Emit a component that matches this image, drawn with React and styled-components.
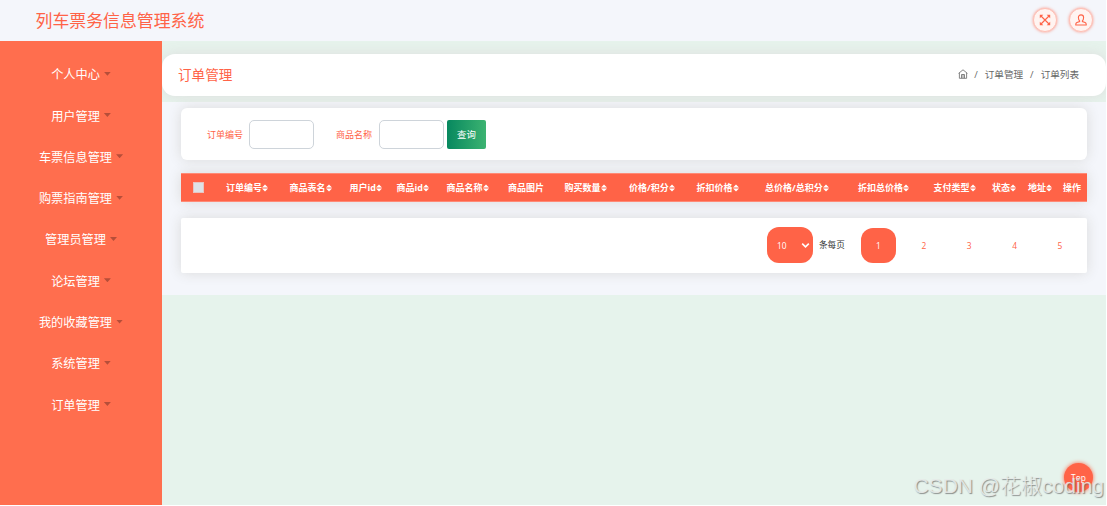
import React from "react";
import styled, { createGlobalStyle } from "styled-components";

const Global = createGlobalStyle`
  * { box-sizing: border-box; }
  body { margin: 0; background: #fff; overflow: hidden; }
  body, input, button, select { font-family: "Open Sans", "Noto Sans CJK SC", sans-serif; }
`;

const Page = styled.div`
  width: 1106px;
  height: 505px;
  display: flex;
  flex-direction: column;
  background: #e6f3ec;
  position: relative;
  overflow: hidden;
`;

const Header = styled.header`
  height: 41px;
  flex: none;
  display: flex;
  align-items: center;
  justify-content: space-between;
  padding: 0 13px 1px 35.5px;
  background: #f4f6fb;
`;

const Brand = styled.div`
  font-size: 16.9px;
  line-height: 24px;
  padding-top: 2px;
  color: #ff6347;
  white-space: nowrap;
`;

const Actions = styled.div`
  display: flex;
  gap: 12px;
`;

const RoundButton = styled.button`
  width: 24px;
  height: 24px;
  padding: 0;
  display: flex;
  align-items: center;
  justify-content: center;
  border: 1px solid #ffc1b6;
  border-radius: 50%;
  background: #fff4f1;
  box-shadow: 0 0 3px #ff6347a8;
  color: #ff6347;
`;

const Body = styled.div`
  flex: 1;
  display: flex;
  min-height: 0;
`;

const Sidebar = styled.nav`
  width: 162px;
  flex: none;
  padding-top: 13.6px;
  background: #ff6e4e;
  position: relative;
  z-index: 1;
`;

const MenuItem = styled.a`
  height: 41.3px;
  display: flex;
  align-items: center;
  justify-content: center;
  gap: 4px;
  color: #fff;
  font-size: 12.2px;
  line-height: 18px;
`;

const Caret = styled.span`
  width: 7px;
  height: 4px;
  margin-top: -3px;
  background: #b64e39;
  clip-path: polygon(0 0, 100% 0, 50% 100%);
`;

const Main = styled.main`
  flex: 1;
  min-width: 0;
  display: flex;
  flex-direction: column;
`;

const TitleBar = styled.div`
  height: 42px;
  margin: 13px 0 6px;
  flex: none;
  display: flex;
  align-items: center;
  justify-content: space-between;
  padding: 0 27px 0 16px;
  border-radius: 13px;
  background: #fff;
  box-shadow: 0 0 13px #dedede;
`;

const PageTitle = styled.h1`
  margin: 0;
  font-size: 13.6px;
  line-height: 20px;
  font-weight: 400;
  color: #ff6347;
`;

const Breadcrumb = styled.div`
  display: flex;
  align-items: center;
  gap: 7px;
  font-size: 9.6px;
  line-height: 14px;
  color: #666;

  svg { margin: -2px -1px 0 0; }
`;

const Content = styled.section`
  height: 193px;
  flex: none;
  padding: 6px 19px 0;
  background: #f4f6fb;
`;

const Panel = styled.div`
  background: #fff;
  box-shadow: 0 0 13px #dadada;
  display: flex;
  align-items: center;
`;

const SearchPanel = styled(Panel)`
  height: 52px;
  border-radius: 6px;
  padding-left: 26px;
`;

const Label = styled.label`
  width: ${(p) => p.$width}px;
  padding-top: 2px;
  font-size: 9px;
  line-height: 14px;
  color: #ff6347;
  white-space: nowrap;
`;

const Field = styled.input`
  width: 65px;
  height: 29px;
  margin-right: ${(p) => p.$gap}px;
  border: 1px solid #ced4da;
  border-radius: 5px;
  background: #fff;
`;

const Search = styled.button`
  width: 39px;
  height: 29px;
  padding: 0;
  border: 0;
  border-radius: 2px;
  font-size: 9.4px;
  color: #fff;
  background: linear-gradient(90deg, #07885f, #3cb371);
`;

const TableHead = styled.div`
  height: 29px;
  margin-top: 13px;
  display: grid;
  grid-template-columns: 45px 63.5px 60px 47px 50px 61.5px 56.5px 64.5px 67.5px 68.5px 93px 75.5px 58.5px 36px 35px 1fr;
  align-items: center;
  border: solid #ff8a76;
  border-width: 1px 0;
  background: #ff6347;
  box-shadow: 0 0 13px #dadada;
  color: #fff;
`;

const Check = styled.span`
  width: 11px;
  height: 11px;
  margin-left: 12px;
  background: #dee2e6;
  border: 1px solid #e8c4c1;
`;

const HeadCell = styled.div`
  display: flex;
  align-items: center;
  font-size: 9px;
  line-height: 14px;
  font-weight: 700;
  white-space: nowrap;
`;

const Pager = styled(Panel)`
  height: 55px;
  margin-top: 16px;
  border-radius: 2px;
  justify-content: flex-end;
  padding: 0 9.5px 1px 0;
`;

const SizeSelect = styled.div`
  width: 46px;
  height: 36px;
  padding: 0 3px 0 9.5px;
  display: flex;
  align-items: center;
  justify-content: space-between;
  border-radius: 12px;
  background: #ff6347;
  color: #fff;
  font-size: 8.4px;
`;

const PerPage = styled.span`
  width: 42px;
  margin: 0 0 0 5.5px;
  font-size: 8.6px;
  line-height: 14px;
  color: #333;
`;

const Pages = styled.div`
  display: flex;
  gap: 10.4px;
`;

const PageLink = styled.a`
  width: 35px;
  height: 35px;
  display: flex;
  align-items: center;
  justify-content: center;
  border-radius: 12px;
  font-size: 8.4px;
  background: ${(p) => (p.$active ? "#ff6347" : "transparent")};
  color: ${(p) => (p.$active ? "#fff" : "#ff6347")};
`;

const TopButton = styled.a`
  position: absolute;
  right: 13px;
  bottom: 13px;
  width: 29px;
  height: 29px;
  display: flex;
  align-items: center;
  justify-content: center;
  border-radius: 50%;
  background: #ff6347;
  box-shadow: 0 0 4px #ff6347;
  color: #fff;
  font-size: 8.4px;
`;

const Watermark = styled.div`
  position: absolute;
  right: 2px;
  bottom: 4px;
  font-family: "Liberation Sans", "Noto Sans CJK SC", sans-serif;
  font-size: 21px;
  line-height: 30px;
  font-weight: 300;
  white-space: nowrap;
  color: rgba(232, 236, 234, 0.9);
  text-shadow: 1px 1px 1px rgba(90, 90, 90, 0.65);
`;

const ExpandIcon = () => (
  <svg width="12" height="12" viewBox="0 0 12 12" fill="none" stroke="currentColor" strokeWidth="1.1">
    <path d="M2 2l8 8M10 2l-8 8" />
    <path fill="currentColor" stroke="none" d="M.8.8h3.500L.8 4.300zM11.200.8v3.500L7.700.8zM11.200 11.200H7.700l3.500-3.500zM.8 11.200V7.700l3.500 3.500z" />
  </svg>
);

const UserIcon = () => (
  <svg width="12" height="12" viewBox="0 0 12 12" fill="none" stroke="currentColor" strokeWidth="1.1">
    <path d="M4.600 6.800C3.700 6 3.400 4.900 3.400 3.600 3.400 1.800 4.400.9 6 .9s2.600.9 2.600 2.700c0 1.300-.3 2.400-1.200 3.200v.8l2.700 1c.7.3 1 .8 1.100 1.400v1H.8v-1c.1-.6.4-1.100 1.100-1.400l2.700-1z" />
  </svg>
);

const HomeIcon = () => (
  <svg width="10" height="10" viewBox="0 0 10 10" fill="none" stroke="#777" strokeWidth=".9">
    <path d="M.6 4.400 5 .8l4.400 3.600M1.400 3.800v5.500h7.200V3.800M3.500 9.200V5.500h3v3.700M5 5.500v3.700" />
  </svg>
);

const SortIcon = () => (
  <svg width="6" height="8" viewBox="0 0 6 8" fill="currentColor">
    <path d="M3 .4 6 3.600H0zM3 7.600 0 4.400h6z" />
  </svg>
);

const ChevronIcon = () => (
  <svg width="9" height="7" viewBox="0 0 9 7" fill="none" stroke="currentColor" strokeWidth="1.6">
    <path d="m1.200 1.600 3.300 3.200 3.300-3.200" />
  </svg>
);

const menu = ["个人中心", "用户管理", "车票信息管理", "购票指南管理", "管理员管理", "论坛管理", "我的收藏管理", "系统管理", "订单管理"];
const columns = ["订单编号", "商品表名", "用户id", "商品id", "商品名称", "商品图片", "购买数量", "价格/积分", "折扣价格", "总价格/总积分", "折扣总价格", "支付类型", "状态", "地址", "操作"];
const unsorted = ["商品图片", "操作"];

export default function App() {
  return (
    <>
      <Global />
      <Page>
        <Header>
          <Brand>列车票务信息管理系统</Brand>
          <Actions>
            <RoundButton><ExpandIcon /></RoundButton>
            <RoundButton><UserIcon /></RoundButton>
          </Actions>
        </Header>
        <Body>
          <Sidebar>
            {menu.map((m) => (
              <MenuItem key={m}>{m}<Caret /></MenuItem>
            ))}
          </Sidebar>
          <Main>
            <TitleBar>
              <PageTitle>订单管理</PageTitle>
              <Breadcrumb>
                <HomeIcon /><span>/</span><span>订单管理</span><span>/</span><span>订单列表</span>
              </Breadcrumb>
            </TitleBar>
            <Content>
              <SearchPanel>
                <Label $width={42}>订单编号</Label>
                <Field $gap={22} />
                <Label $width={43}>商品名称</Label>
                <Field $gap={3} />
                <Search>查询</Search>
              </SearchPanel>
              <TableHead>
                <Check />
                {columns.map((c) => (
                  <HeadCell key={c}>{c}{!unsorted.includes(c) && <SortIcon />}</HeadCell>
                ))}
              </TableHead>
              <Pager>
                <SizeSelect>10<ChevronIcon /></SizeSelect>
                <PerPage>条每页</PerPage>
                <Pages>
                  {[1, 2, 3, 4, 5].map((n) => (
                    <PageLink key={n} $active={n === 1}>{n}</PageLink>
                  ))}
                </Pages>
              </Pager>
            </Content>
          </Main>
        </Body>
        <TopButton>Top</TopButton>
        <Watermark>CSDN @花椒coding</Watermark>
      </Page>
    </>
  );
}
